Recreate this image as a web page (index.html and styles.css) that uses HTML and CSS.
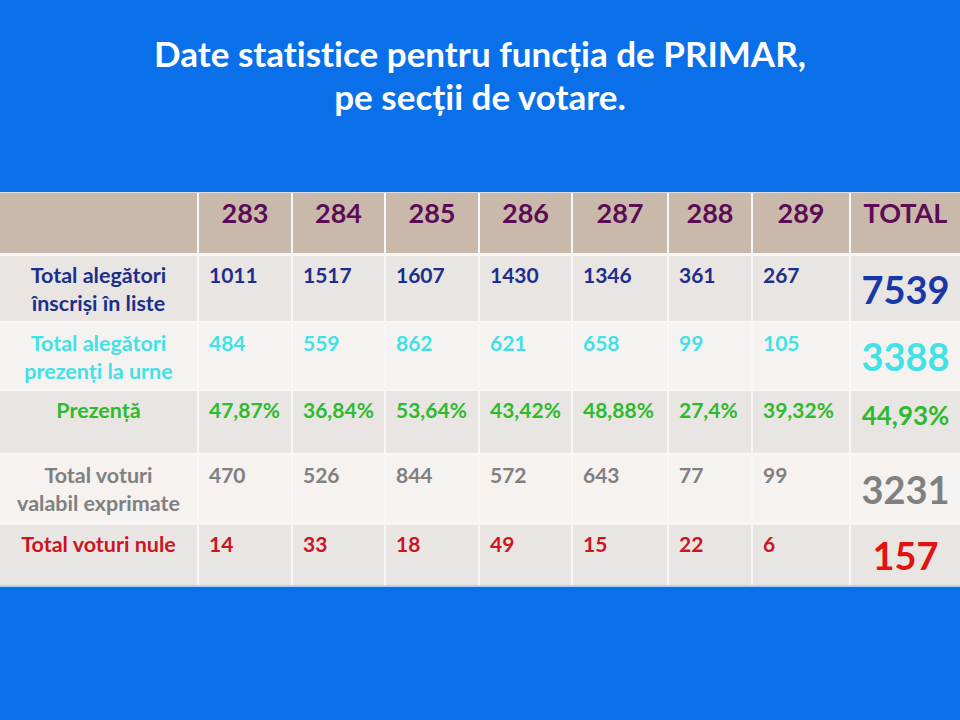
FILE: index.html
```html
<!DOCTYPE html>
<html lang="ro">
<head>
<meta charset="utf-8">
<title>Date statistice PRIMAR</title>
<link rel="stylesheet" href="styles.css">
</head>
<body>
<div class="slide">
  <h1 class="title">Date statistice pentru funcția de PRIMAR,<br>pe secții de votare.</h1>
  <div class="stats">
    <div class="cell head"></div>
    <div class="cell head">283</div>
    <div class="cell head">284</div>
    <div class="cell head">285</div>
    <div class="cell head">286</div>
    <div class="cell head">287</div>
    <div class="cell head">288</div>
    <div class="cell head">289</div>
    <div class="cell head">TOTAL</div>

    <div class="cell label r1 odd">Total alegători<br>înscriși în liste</div>
    <div class="cell val r1 odd">1011</div>
    <div class="cell val r1 odd">1517</div>
    <div class="cell val r1 odd">1607</div>
    <div class="cell val r1 odd">1430</div>
    <div class="cell val r1 odd">1346</div>
    <div class="cell val r1 odd">361</div>
    <div class="cell val r1 odd">267</div>
    <div class="cell total r1 odd t1">7539</div>

    <div class="cell label r2 even">Total alegători<br>prezenți la urne</div>
    <div class="cell val r2 even">484</div>
    <div class="cell val r2 even">559</div>
    <div class="cell val r2 even">862</div>
    <div class="cell val r2 even">621</div>
    <div class="cell val r2 even">658</div>
    <div class="cell val r2 even">99</div>
    <div class="cell val r2 even">105</div>
    <div class="cell total r2 even">3388</div>

    <div class="cell label r3 odd">Prezență</div>
    <div class="cell val r3 odd">47,87%</div>
    <div class="cell val r3 odd">36,84%</div>
    <div class="cell val r3 odd">53,64%</div>
    <div class="cell val r3 odd">43,42%</div>
    <div class="cell val r3 odd">48,88%</div>
    <div class="cell val r3 odd">27,4%</div>
    <div class="cell val r3 odd">39,32%</div>
    <div class="cell total pct r3 odd">44,93%</div>

    <div class="cell label r4 even">Total voturi<br>valabil exprimate</div>
    <div class="cell val r4 even">470</div>
    <div class="cell val r4 even">526</div>
    <div class="cell val r4 even">844</div>
    <div class="cell val r4 even">572</div>
    <div class="cell val r4 even">643</div>
    <div class="cell val r4 even">77</div>
    <div class="cell val r4 even">99</div>
    <div class="cell total r4 even">3231</div>

    <div class="cell label r5 odd">Total voturi nule</div>
    <div class="cell val r5 odd">14</div>
    <div class="cell val r5 odd">33</div>
    <div class="cell val r5 odd">18</div>
    <div class="cell val r5 odd">49</div>
    <div class="cell val r5 odd">15</div>
    <div class="cell val r5 odd">22</div>
    <div class="cell val r5 odd">6</div>
    <div class="cell total r5 odd t5">157</div>
  </div>
</div>
</body>
</html>
```
FILE: styles.css
```css
html, body {
  margin: 0;
  padding: 0;
}
body {
  background: #0a70ea;
  font-family: Lato, "Liberation Sans", sans-serif;
  font-weight: 700;
  font-variant-ligatures: none;
  width: 960px;
  height: 720px;
  overflow: hidden;
}
.slide {
  padding-top: 32px;
}
.title {
  margin: 0;
  color: #ffffff;
  text-align: center;
  font-size: 35px;
  line-height: 43px;
  font-weight: 700;
}
.stats {
  margin-top: 74px;
  display: grid;
  grid-template-columns: 197px 92px 91px 92px 91px 94px 82px 96px 1fr;
  grid-template-rows: 60px 65px 64px 62px 66px 60px;
  column-gap: 2px;
  row-gap: 3px;
  background: #f7f7f7;
  border-top: 1px solid #d8dde8;
  border-bottom: 2px solid #a9d4f6;
}
.cell {
  box-sizing: border-box;
}
.head {
  background: #c9b9aa;
  color: #5c0b56;
  font-size: 27px;
  line-height: 34px;
  text-align: center;
  padding-top: 3px;
}
.odd { background: #e9e5e2; }
.even { background: #f5f2f0; }
.label {
  text-align: center;
  font-size: 21.5px;
  line-height: 28px;
  padding-top: 5px;
}
.val {
  font-size: 21px;
  line-height: 28px;
  padding: 5px 0 0 10px;
}
.total {
  display: flex;
  align-items: center;
  justify-content: center;
  font-size: 38px;
}
.total.pct {
  font-size: 26px;
  align-items: flex-start;
  padding-top: 8px;
}
.head:last-child { font-size: 26px; }
.r1 { color: #1c2f8c; }
.t1 { color: #1838aa; }
.r2 { color: #3fe2e6; }
.r3 { color: #2dbb2d; }
.r4 { color: #808080; }
.r5 { color: #c9161f; }
.t5 { color: #e31212; }
```
